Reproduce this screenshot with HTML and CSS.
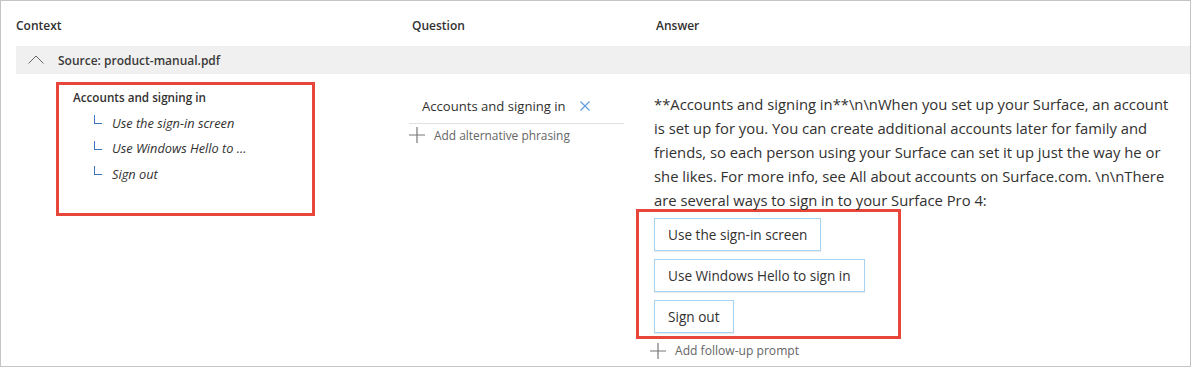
FILE: index.html
```html
<!DOCTYPE html>
<html>
<head>
<meta charset="utf-8">
<link rel="stylesheet" href="styles.css">
</head>
<body>
<div class="frame">
  <div class="head">
    <div class="hcell">Context</div>
    <div class="hcell">Question</div>
    <div class="hcell">Answer</div>
  </div>
  <div class="band">
    <svg class="chev" width="16" height="9" viewBox="0 0 16 9"><path d="M0.5 8.5 L8 1 L15.5 8.5" fill="none" stroke="#666" stroke-width="1"/></svg>
    <span>Source: product-manual.pdf</span>
  </div>
  <div class="grid">
    <div class="ctx">
      <div class="redbox ctxbox">
        <div class="ctitle">Accounts and signing in</div>
        <div class="titem"><span class="elbow"></span><span>Use the sign-in screen</span></div>
        <div class="titem"><span class="elbow"></span><span>Use Windows Hello to ...</span></div>
        <div class="titem"><span class="elbow"></span><span>Sign out</span></div>
      </div>
    </div>
    <div class="qcol">
      <div class="qitem">
        <span>Accounts and signing in</span>
        <svg class="x" width="10" height="10" viewBox="0 0 10 10"><path d="M0.5 0.5 L9.5 9.5 M9.5 0.5 L0.5 9.5" stroke="#5a9bdc" stroke-width="1.1" fill="none"/></svg>
      </div>
      <div class="add">
        <svg width="16" height="16" viewBox="0 0 16 16"><path d="M8 0 V16 M0 8 H16" stroke="#777" stroke-width="1.2" fill="none"/></svg>
        <span>Add alternative phrasing</span>
      </div>
    </div>
    <div class="acol">
      <p class="atext">**Accounts and signing in**\n\nWhen you set up your Surface, an account is set up for you. You can create additional accounts later for family and friends, so each person using your Surface can set it up just the way he or she likes. For more info, see All about accounts on Surface.com. \n\nThere are several ways to sign in to your Surface Pro 4:</p>
      <div class="redbox btnbox">
        <div class="btn">Use the sign-in screen</div>
        <div class="btn">Use Windows Hello to sign in</div>
        <div class="btn">Sign out</div>
      </div>
      <div class="add follow">
        <svg width="16" height="16" viewBox="0 0 16 16"><path d="M8 0 V16 M0 8 H16" stroke="#777" stroke-width="1.2" fill="none"/></svg>
        <span>Add follow-up prompt</span>
      </div>
    </div>
  </div>
</div>
</body>
</html>
```
FILE: styles.css
```css
html, body {
  margin: 0;
  padding: 0;
  background: #fff;
}
.frame {
  width: 1191px;
  height: 367px;
  box-sizing: border-box;
  border: 1px solid #c4c4c4;
  font-family: "Open Sans", "Noto Sans", sans-serif;
  color: #323130;
  overflow: hidden;
}
.head {
  display: grid;
  grid-template-columns: 396px 244px 1fr;
  padding: 16px 0 0 15px;
  height: 29px;
}
.hcell {
  font-size: 12px;
  font-weight: 600;
  line-height: 18px;
}
.band {
  margin-left: 15px;
  height: 28px;
  background: #f0f0f0;
  display: flex;
  align-items: center;
  font-size: 12px;
  font-weight: 600;
  color: #3b3a39;
}
.chev {
  margin-left: 12px;
  margin-right: 14px;
  margin-top: -2px;
}
.grid {
  display: grid;
  grid-template-columns: 393px 245px 1fr;
  padding-left: 15px;
}
.redbox {
  border: 3px solid #e8463b;
}
.ctx {
  padding: 8px 0 0 40px;
}
.ctxbox {
  width: 253px;
  height: 128px;
  box-sizing: content-box;
  padding: 0;
}
.ctitle {
  font-size: 11.7px;
  font-weight: 600;
  line-height: 16px;
  margin: 4px 0 5px 14px;
}
.titem {
  display: flex;
  align-items: center;
  height: 25.5px;
  margin-left: 32px;
  font-size: 12.8px;
  font-style: italic;
}
.elbow {
  width: 8px;
  height: 9px;
  border-left: 1px solid #3a76c4;
  border-bottom: 1px solid #3a76c4;
  margin: -6px 10px 0 3px;
  box-sizing: border-box;
}
.qcol {
  padding-top: 20px;
}
.qitem {
  width: 215px;
  box-sizing: border-box;
  border-bottom: 1px solid #e1e1e1;
  padding: 3px 0 7px 13px;
  display: flex;
  align-items: center;
  font-size: 13.1px;
  line-height: 19px;
}
.x {
  margin-left: 14px;
  margin-top: -2px;
}
.add {
  display: flex;
  align-items: center;
  margin-top: 3px;
  font-size: 11.9px;
  color: #666;
  line-height: 16px;
}
.add svg {
  margin-right: 9px;
}
.acol {
  padding-top: 18px;
}
.atext {
  margin: 0;
  width: 521px;
  font-size: 14.8px;
  line-height: 24px;
  color: #323130;
}
.btnbox {
  margin: -3px 0 0 -18px;
  width: 229px;
  padding: 6px 15px 3px 15px;
  display: flex;
  flex-direction: column;
  align-items: flex-start;
  gap: 8px;
}
.btn {
  border: 1px solid #a8d4f3;
  box-shadow: 0 1px 1px rgba(0,0,0,0.08);
  height: 33px;
  box-sizing: border-box;
  padding: 0 13px;
  display: flex;
  align-items: center;
  font-size: 13.6px;
  color: #323130;
}
.follow {
  margin: 4px 0 0 -4px;
  font-size: 12.1px;
}
```
